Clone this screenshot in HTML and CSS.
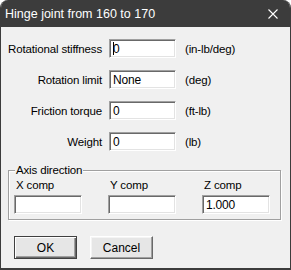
FILE: index.html
```html
<!DOCTYPE html>
<html lang="en">
<head>
  <meta charset="UTF-8" />
  <title>Hinge joint from 160 to 170</title>
  <link rel="stylesheet" href="styles.css">
</head>
<body>
  <div class="window">
    <div class="titlebar">
      <span class="title">Hinge joint from 160 to 170</span>
      <svg class="close" width="10" height="10" viewBox="0 0 10 10">
        <path d="M0.5 0.5L9.5 9.5M9.5 0.5L0.5 9.5" stroke="#fff" stroke-width="1.1" fill="none"/>
      </svg>
    </div>

    <div class="content">
      <div class="row">
        <label>Rotational stiffness</label>
        <div class="edit"><span class="caret"></span>0</div>
        <span class="unit">(in-lb/deg)</span>
      </div>
      <div class="row">
        <label>Rotation limit</label>
        <div class="edit">None</div>
        <span class="unit">(deg)</span>
      </div>
      <div class="row">
        <label>Friction torque</label>
        <div class="edit">0</div>
        <span class="unit">(ft-lb)</span>
      </div>
      <div class="row">
        <label>Weight</label>
        <div class="edit">0</div>
        <span class="unit">(lb)</span>
      </div>

      <fieldset class="group">
        <legend>Axis direction</legend>
        <div class="axes">
          <div class="axis">
            <span>X comp</span>
            <div class="edit"></div>
          </div>
          <div class="axis">
            <span>Y comp</span>
            <div class="edit"></div>
          </div>
          <div class="axis">
            <span>Z comp</span>
            <div class="edit">1.000</div>
          </div>
        </div>
      </fieldset>

      <div class="buttons">
        <button class="btn default">OK</button>
        <button class="btn">Cancel</button>
      </div>
    </div>
  </div>
</body>
</html>
```

FILE: styles.css
```css
:root{--face:#f0f0f0;--frame:#3c3c3c;--text:#000}
*{box-sizing:border-box;font-family:"Liberation Sans",Arial,sans-serif}
body{margin:0;background:#fff;color:var(--text)}
.window{width:291px;height:270px;background:var(--face);border:1px solid var(--frame);border-top:none;border-bottom-width:2px;border-radius:8px 8px 0 0;overflow:hidden;display:flex;flex-direction:column}
.titlebar{height:27px;flex:none;background:var(--frame);color:#fff;display:flex;align-items:center;justify-content:space-between;padding:0 13px 0 5px;margin:0 -1px}
.title{font-size:12.5px}
.close{display:block}
.content{padding:12px 0 0 7px;font-size:11.5px;letter-spacing:-.15px}
.row{display:flex;align-items:center;height:19px;margin-bottom:12px}
.row label{width:94px;text-align:right;margin-right:7px}
.row .edit{width:67px}
.unit{margin-left:9px}
.edit{height:19px;background:#fff;border:1px solid;border-color:#a0a0a0 #fff #fff #a0a0a0;box-shadow:inset 1px 1px #696969,inset -1px -1px #e3e3e3;padding:0 0 0 3px;display:flex;align-items:center;font-size:12px;letter-spacing:-.2px}
.caret{width:1px;height:13px;background:#000;margin-right:-1px}
.group{margin:4px 9px 0 0;padding:0 0 5px 5px;border:1px solid #a0a0a0;box-shadow:inset 1px 1px #fff,1px 1px #fff;min-width:0}
.group legend{padding:0 1px;margin-left:1px;line-height:14px;background:var(--face)}
.axes{display:grid;grid-template-columns:repeat(3,68px);column-gap:26px;margin-top:1px}
.axis{display:flex;flex-direction:column;gap:2px}
.axis span{line-height:15px;padding-left:2px}
.buttons{display:flex;gap:13px;margin-top:16px;padding-left:6px}
.btn{width:63px;height:23px;background:#e6e6e6;border:1px solid;border-color:#fff #696969 #696969 #fff;box-shadow:inset -1px -1px #a0a0a0,inset 1px 1px #f4f4f4;font-size:12px;color:#000;padding:0}
.btn.default{border-color:#404040;box-shadow:inset 1px 1px #fff,inset -1px -1px #696969,inset -2px -2px #a0a0a0}
```
